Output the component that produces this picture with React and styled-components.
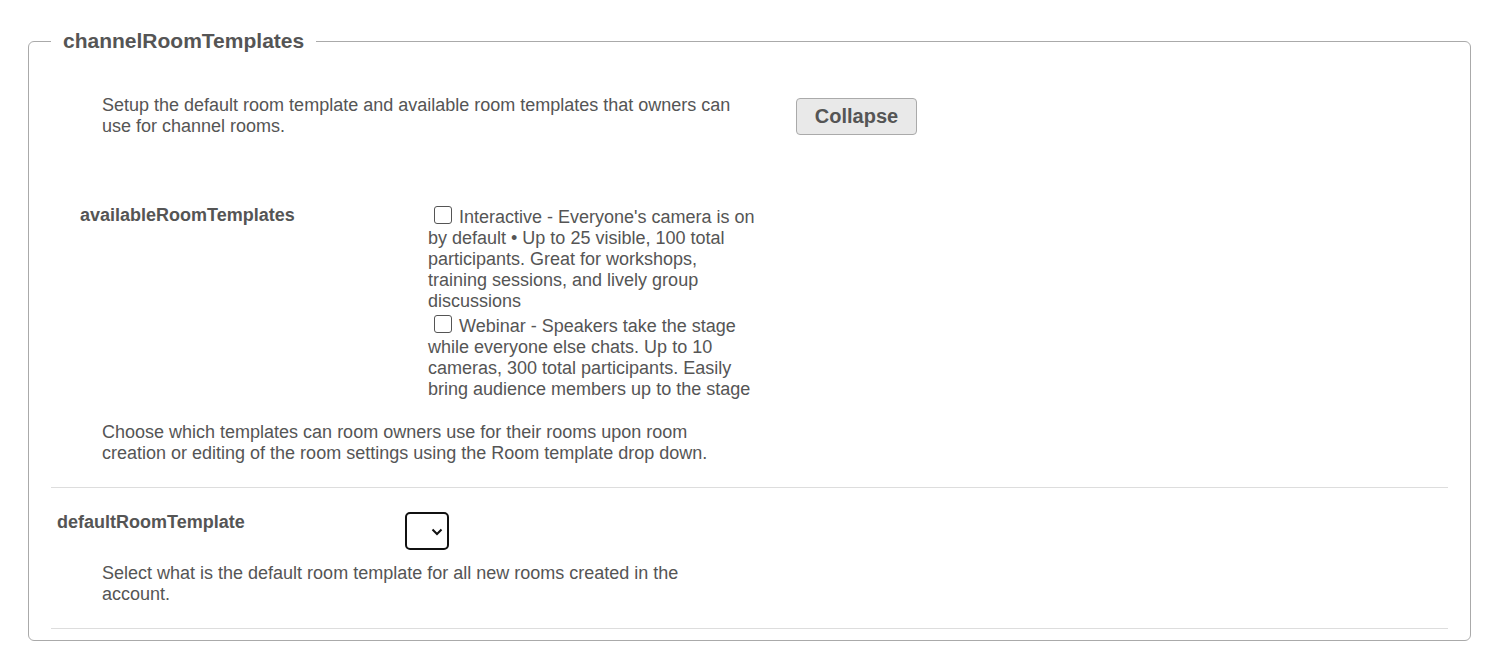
import React from "react";
import styled, { createGlobalStyle } from "styled-components";

const Global = createGlobalStyle`
  html, body { margin: 0; padding: 0; background: #fff; }
  body { font-family: "Liberation Sans", Arial, sans-serif; color: #555; }
`;

const Page = styled.div`
  padding: 30px 32px 24px 28px;
`;

const Fieldset = styled.fieldset`
  margin: 0;
  border: 1px solid #aaa;
  border-radius: 6px;
  padding: 0 22px 11px 22px;
  min-width: 0;
`;

const Legend = styled.legend`
  padding: 0 12px;
  font-size: 21px;
  font-weight: bold;
  color: #555;
  line-height: 22px;
`;

const Intro = styled.div`
  display: flex;
  align-items: flex-start;
  padding: 43px 0 0 51px;
`;

const Text = styled.p`
  margin: 0;
  font-size: 18px;
  line-height: 21px;
  color: #555;
  width: ${(p) => p.$w || 650}px;
`;

const Button = styled.button`
  margin: 3px 0 0 44px;
  width: 121px;
  height: 37px;
  font-family: "Liberation Sans", Arial, sans-serif;
  font-size: 20px;
  font-weight: bold;
  color: #555;
  background: #e9e9e9;
  border: 1px solid #aaa;
  border-radius: 4px;
  padding: 0;
`;

const Setting = styled.div`
  padding: ${(p) => p.$top}px 0 23px 0;
  border-bottom: 1px solid #ddd;
`;

const SettingRow = styled.div`
  display: flex;
  align-items: flex-start;
  padding-left: ${(p) => p.$indent}px;
`;

const Label = styled.div`
  font-size: 18px;
  font-weight: bold;
  line-height: 21px;
  color: #555;
  width: ${(p) => p.$w}px;
  flex-shrink: 0;
  padding-top: ${(p) => p.$pt || 0}px;
`;

const OptionList = styled.div`
  width: 332px;
  font-size: 18px;
  line-height: 21px;
  color: #555;
  padding-top: 1px;
`;

const Option = styled.label`
  display: block;
  & + & {
    margin-top: 3px;
  }
`;

const Check = styled.input.attrs({ type: "checkbox" })`
  appearance: none;
  -webkit-appearance: none;
  width: 18px;
  height: 18px;
  margin: 0 7px 0 6px;
  border: 1.5px solid #555;
  border-radius: 3px;
  background: #fff;
  vertical-align: -1px;
  box-sizing: border-box;
`;

const Help = styled(Text)`
  margin: ${(p) => p.$mt}px 0 0 51px;
`;

const Select = styled.select`
  width: 44px;
  height: 38px;
  border: 2px solid #111;
  border-radius: 5px;
  background: #fff;
  appearance: none;
  -webkit-appearance: none;
  padding: 0;
  background-image: url("data:image/svg+xml;utf8,<svg xmlns='http://www.w3.org/2000/svg' width='12' height='8' viewBox='0 0 12 8'><path d='M1.5 1.5 L6 6 L10.5 1.5' fill='none' stroke='%23111' stroke-width='2'/></svg>");
  background-repeat: no-repeat;
  background-position: 24px 14px;
  margin-top: 2px;
`;

export default function App() {
  return (
    <Page>
      <Global />
      <Fieldset>
        <Legend>channelRoomTemplates</Legend>
        <Intro>
          <Text $w={650}>
            Setup the default room template and available room templates that
            owners can use for channel rooms.
          </Text>
          <Button>Collapse</Button>
        </Intro>
        <Setting $top={68}>
          <SettingRow $indent={29}>
            <Label $w={348}>availableRoomTemplates</Label>
            <OptionList>
              <Option>
                <Check />
                Interactive - Everyone's camera is on by default • Up to 25
                visible, 100 total participants. Great for workshops, training
                sessions, and lively group discussions
              </Option>
              <Option>
                <Check />
                Webinar - Speakers take the stage while everyone else chats. Up
                to 10 cameras, 300 total participants. Easily bring audience
                members up to the stage
              </Option>
            </OptionList>
          </SettingRow>
          <Help $w={620} $mt={22}>
            Choose which templates can room owners use for their rooms upon
            room creation or editing of the room settings using the Room
            template drop down.
          </Help>
        </Setting>
        <Setting $top={22}>
          <SettingRow $indent={6}>
            <Label $w={348} $pt={2}>defaultRoomTemplate</Label>
            <Select aria-label="defaultRoomTemplate" />
          </SettingRow>
          <Help $w={600} $mt={13}>
            Select what is the default room template for all new rooms created
            in the account.
          </Help>
        </Setting>
      </Fieldset>
    </Page>
  );
}
